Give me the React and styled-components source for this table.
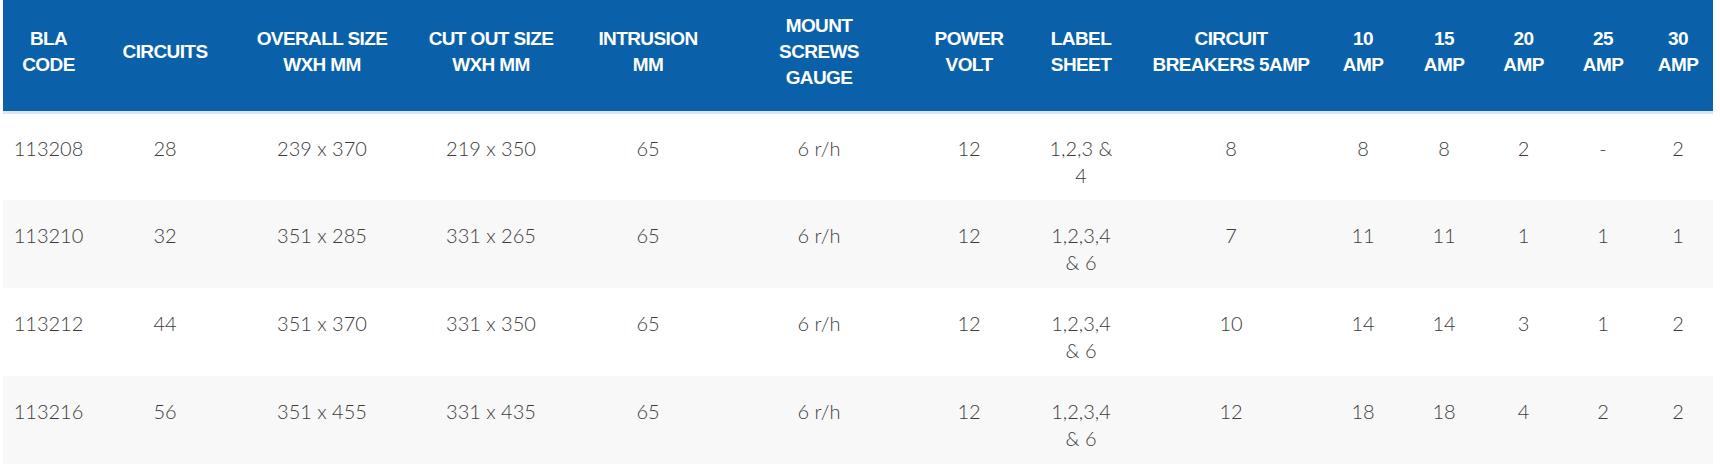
import React from "react";
import styled, { createGlobalStyle } from "styled-components";

const GlobalStyle = createGlobalStyle`
  html, body {
    margin: 0;
    padding: 0;
    background: #ffffff;
  }
  body {
    font-family: "Lato", "Liberation Sans", sans-serif;
  }
`;

const columns = [
  { key: "code", label: ["BLA", "CODE"], width: 91 },
  { key: "circuits", label: ["CIRCUITS"], width: 142 },
  { key: "overall", label: ["OVERALL SIZE", "WXH MM"], width: 172 },
  { key: "cutout", label: ["CUT OUT SIZE", "WXH MM"], width: 166 },
  { key: "intrusion", label: ["INTRUSION", "MM"], width: 148 },
  { key: "screws", label: ["MOUNT", "SCREWS", "GAUGE"], width: 194 },
  { key: "volt", label: ["POWER", "VOLT"], width: 106 },
  { key: "sheet", label: ["LABEL", "SHEET"], width: 118 },
  { key: "amp5", label: ["CIRCUIT", "BREAKERS 5AMP"], width: 182 },
  { key: "amp10", label: ["10", "AMP"], width: 82 },
  { key: "amp15", label: ["15", "AMP"], width: 80 },
  { key: "amp20", label: ["20", "AMP"], width: 79 },
  { key: "amp25", label: ["25", "AMP"], width: 80 },
  { key: "amp30", label: ["30", "AMP"], width: 70 },
];

const rows = [
  ["113208", "28", "239 x 370", "219 x 350", "65", "6 r/h", "12", "1,2,3 & 4", "8", "8", "8", "2", "-", "2"],
  ["113210", "32", "351 x 285", "331 x 265", "65", "6 r/h", "12", "1,2,3,4 & 6", "7", "11", "11", "1", "1", "1"],
  ["113212", "44", "351 x 370", "331 x 350", "65", "6 r/h", "12", "1,2,3,4 & 6", "10", "14", "14", "3", "1", "2"],
  ["113216", "56", "351 x 455", "331 x 435", "65", "6 r/h", "12", "1,2,3,4 & 6", "12", "18", "18", "4", "2", "2"],
];

export default function App() {
  return (
    <>
      <GlobalStyle />
      <Page>
        <Table>
          <colgroup>
            {columns.map((c) => (
              <col key={c.key} style={{ width: c.width }} />
            ))}
          </colgroup>
          <thead>
            <HeadRow>
              {columns.map((c) => (
                <HeadCell key={c.key}>
                  {c.label.map((line) => (
                    <HeadLine key={line}>{line}</HeadLine>
                  ))}
                </HeadCell>
              ))}
            </HeadRow>
          </thead>
          <tbody>
            {rows.map((row, i) => (
              <BodyRow key={row[0]} $striped={i % 2 === 1} $first={i === 0}>
                {row.map((value, j) => (
                  <Cell key={j}>
                    {columns[j].key === "sheet" ? <Wrap>{value}</Wrap> : value}
                  </Cell>
                ))}
              </BodyRow>
            ))}
          </tbody>
        </Table>
      </Page>
    </>
  );
}

const Page = styled.div`
  padding: 0 7px 0 3px;
  width: 1710px;
`;

const Table = styled.table`
  width: 1710px;
  table-layout: fixed;
  border-collapse: collapse;
  border-spacing: 0;
`;

const HeadRow = styled.tr`
  background-color: #0a61aa;
  border-bottom: 3px solid #dce4ed;
`;

const HeadCell = styled.th`
  height: 104px;
  padding: 0 2px 7px;
  vertical-align: middle;
  text-align: center;
  color: #ffffff;
  font-family: "Liberation Sans", Arial, sans-serif;
  font-weight: 700;
  font-size: 19px;
  letter-spacing: -0.6px;
  line-height: 26px;
  white-space: nowrap;
`;

const HeadLine = styled.div`
  display: block;
`;

const BodyRow = styled.tr`
  background-color: ${(p) => (p.$striped ? "#f8f8f8" : "#ffffff")};

  & > td {
    padding-top: ${(p) => (p.$first ? "21px" : "22px")};
    padding-bottom: ${(p) => (p.$first ? "11px" : "12px")};
  }
`;

const Cell = styled.td`
  height: 54px;
  padding: 22px 4px 12px;
  vertical-align: top;
  text-align: center;
  color: #3b3b3b;
  font-family: "Lato", "Liberation Sans", sans-serif;
  font-weight: 300;
  font-size: 20px;
  line-height: 27px;
`;

const Wrap = styled.span`
  display: inline-block;
  max-width: 74px;
`;
